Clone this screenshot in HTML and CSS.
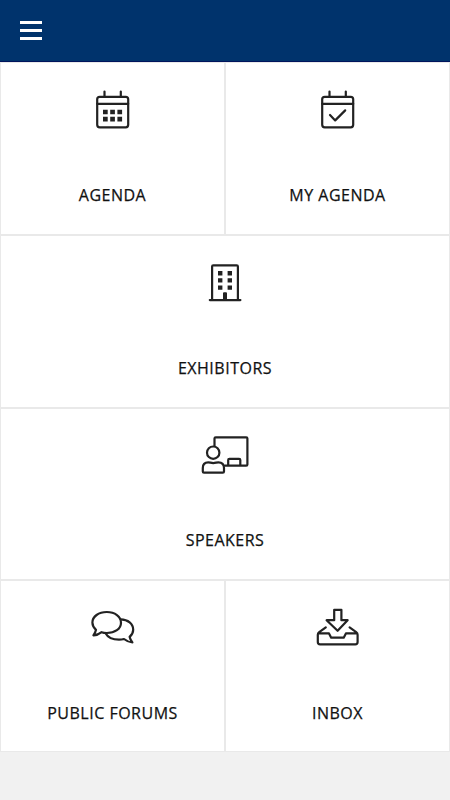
FILE: index.html
```html
<!DOCTYPE html>
<html lang="en">
<head>
  <meta charset="UTF-8" />
  <meta name="viewport" content="width=device-width,initial-scale=1.0" />
  <title>Event Home</title>
  <link rel="stylesheet" href="styles.css">
</head>
<body>

  <!-- Top bar -->
  <header class="top-bar">
    <button class="menu-btn" aria-label="Menu">
      <span></span>
      <span></span>
      <span></span>
    </button>
  </header>

  <!-- Navigation tiles -->
  <main class="tiles">
    <a class="tile" href="#">
      <svg class="icon" width="56" height="56" viewBox="0 0 56 56">
        <rect x="12.2" y="14.8" width="31" height="30.5" rx="2.5" />
        <path d="M12.2 21.8h31M19.5 9.5v5M35.8 9.5v5" />
        <path class="solid" d="M18 27.7h4.7v4.6H18zM25.2 27.7h4.7v4.6h-4.7zM32.4 27.7h4.7v4.6h-4.7zM18 34.8h4.7v4.6H18zM25.2 34.8h4.7v4.6h-4.7zM32.4 34.8h4.7v4.6h-4.7z" />
      </svg>
      <span class="label">Agenda</span>
    </a>
    <a class="tile" href="#">
      <svg class="icon" width="56" height="56" viewBox="0 0 56 56">
        <rect x="12.2" y="14.8" width="31" height="30.5" rx="2.5" />
        <path d="M12.2 21.8h31M19.5 9.5v5M35.8 9.5v5" />
        <path d="M20 33l5.2 5.4L35.2 28.4" />
      </svg>
      <span class="label">My Agenda</span>
    </a>
    <a class="tile wide" href="#">
      <svg class="icon" width="56" height="56" viewBox="0 0 56 56">
        <path d="M15.1 44.5V11.5q0-1.2 1.2-1.2h23.4q1.2 0 1.2 1.2v33M12.8 45.1h30.6" />
        <path class="solid" d="M21 16h4.4v4.4H21zM30.6 16H35v4.4h-4.4zM21 23.2h4.4v4.4H21zM30.6 23.2H35v4.4h-4.4zM21 30.4h4.4v4.4H21zM30.6 30.4H35v4.4h-4.4zM26 45v-6.8q0-1 1-1h2q1 0 1 1V45z" />
      </svg>
      <span class="label">Exhibitors</span>
    </a>
    <a class="tile wide" href="#">
      <svg class="icon" width="60" height="56" viewBox="0 0 60 56">
        <path d="M19.5 19V11.5q0-1.2 1.2-1.2h30.5q1.2 0 1.2 1.2v26q0 1.2-1.2 1.2H30M33.2 38.5V33q0-1.2 1.2-1.2h9.7q1.2 0 1.2 1.2v5.5" />
        <circle cx="18.2" cy="25.7" r="6.2" />
        <path d="M7.8 44.5V41c0-3.5 2-5.7 5.4-5.7 1.8 0 2.7.8 5 .8s3.4-.8 5.2-.8c3.6 0 5.6 2.2 5.6 5.7v3.5q0 1.2-1.2 1.2H9q-1.2 0-1.2-1.2z" />
      </svg>
      <span class="label">Speakers</span>
    </a>
    <a class="tile low" href="#">
      <svg class="icon" width="56" height="56" viewBox="0 0 56 56">
        <path d="M11 29.8C8.7 27.8 7.4 25.4 7.4 22.6 7.4 16.5 13.7 12 21.8 12S36 16.5 36 22.7 29.8 33 21.8 33c-1.8 0-3.6-.2-5.2-.8-2.3 1.8-5.1 3.3-8.2 3.2 1.3-1.8 2.2-3.6 2.6-5.6z" />
        <path d="M20.5 33.2c2.3 4.1 7.3 6.5 13.5 6.5 1.8 0 3.4-.2 5-.7 2.4 1.9 5.2 3.4 8.4 3.5-1.4-1.7-2.4-3.7-2.8-5.7 2.2-1.9 3.6-4.4 3.6-7.1 0-6-5.2-10.1-12.5-10.3" />
      </svg>
      <span class="label">Public Forums</span>
    </a>
    <a class="tile low" href="#">
      <svg class="icon" width="60" height="56" viewBox="0 0 60 56">
        <path d="M26.2 9.8h7.2v10.4h6.2L29.6 30.8 18.6 20.2h7.6z" />
        <path d="M17.8 27.3l-6.6 4.8q-1.4 1-1.4 2.7V42q0 2.3 2.3 2.3h35.2q2.3 0 2.3-2.3v-7.2q0-1.7-1.4-2.7L41.6 27.3M10.5 33.4H21l2.2 4.3h12.5l2.2-4.3h11" />
      </svg>
      <span class="label">Inbox</span>
    </a>
  </main>

</body>
</html>
```
FILE: styles.css
```css
* {
  box-sizing: border-box;
}
body {
  margin: 0;
  min-height: 100vh;
  background: #f1f1f1;
  font-family: "Open Sans", "Noto Sans", sans-serif;
  color: #111;
}
.top-bar {
  display: flex;
  align-items: center;
  height: 62px;
  padding: 0 20px;
  background: #00336c;
  border-bottom: 1px solid #00145c;
}
.menu-btn {
  display: flex;
  flex-direction: column;
  gap: 5px;
  padding: 0;
  border: none;
  background: none;
  cursor: pointer;
}
.menu-btn span {
  width: 22px;
  height: 3px;
  background: #fff;
}
.tiles {
  display: grid;
  grid-template-columns: 1fr 1fr;
  grid-template-rows: 173px 173px 172px 172px;
}
.tile {
  display: flex;
  flex-direction: column;
  align-items: center;
  justify-content: flex-end;
  padding-bottom: 26px;
  background: #fff;
  border: 1px solid #e9e9e9;
  color: inherit;
  text-decoration: none;
}
.wide {
  grid-column: span 2;
}
.low {
  padding-bottom: 25px;
}
.icon {
  margin-bottom: 44px;
  fill: none;
  stroke: #222;
  stroke-width: 2.2;
  stroke-linecap: round;
  stroke-linejoin: round;
}
.solid {
  fill: #222;
  stroke: none;
}
.label {
  font-size: 16px;
  font-weight: 500;
  line-height: 26px;
  letter-spacing: 0.5px;
  text-transform: uppercase;
  -webkit-text-stroke: 0.25px #111;
}
```
